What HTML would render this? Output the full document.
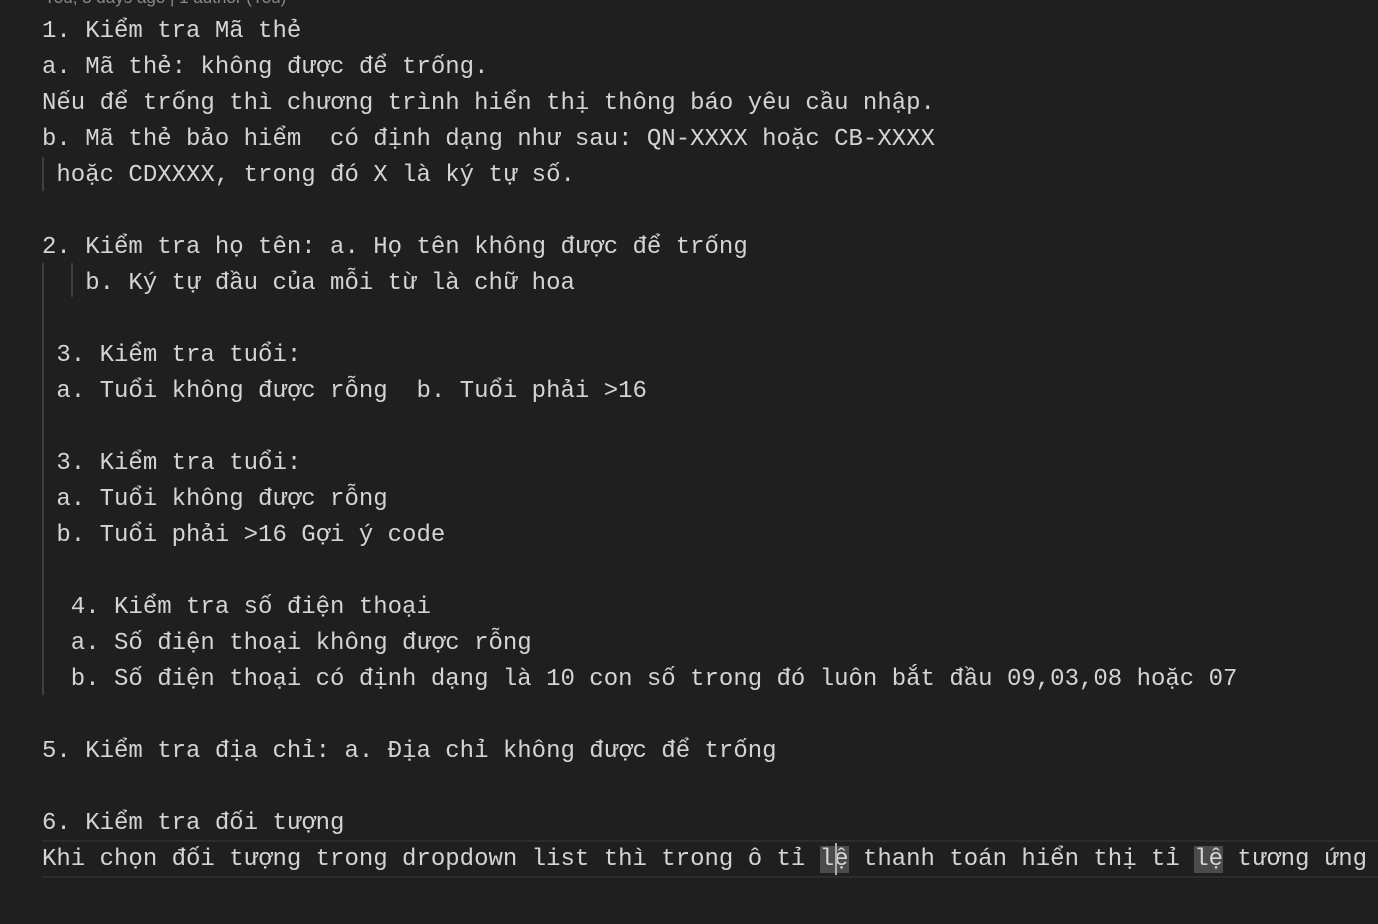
<!DOCTYPE html>
<html><head><meta charset="utf-8"><style>
html,body{margin:0;padding:0;background:#1f1f1f;width:1378px;height:924px;overflow:hidden}
body{position:relative;font-family:"Liberation Mono","DejaVu Sans Mono",monospace;font-size:24px;color:#d4d4d4}
.l{position:absolute;left:42px;height:36px;line-height:36px;white-space:pre}
.g{position:absolute;width:2px;background:#404040}
.cur{position:absolute;left:42px;right:0;top:840px;height:34px;border-top:2px solid #2c2c2c;border-bottom:2px solid #2c2c2c;}
.hl{background:#4b4b4b}
.top{position:absolute;left:44px;top:-12px;font-family:"Liberation Sans",sans-serif;font-size:17px;color:#8a8a8a;white-space:pre}
</style></head><body>
<div class="top">You, 3 days ago | 1 author (You)</div>
<div class="cur"></div>
<div class="g" style="left:42px;top:157px;height:34px"></div>
<div class="g" style="left:42px;top:263px;height:432px"></div>
<div class="g" style="left:71px;top:263px;height:34px"></div>
<div class="l" style="top:14px">1. Ki&#7875;m tra Mã thẻ</div>
<div class="l" style="top:50px">a. Mã thẻ: không được &#273;&#7875; tr&#7889;ng.</div>
<div class="l" style="top:86px">N&#7871;u &#273;&#7875; tr&#7889;ng thì chương trình hi&#7875;n thị thông báo yêu c&#7847;u nhập.</div>
<div class="l" style="top:122px">b. Mã thẻ bảo hi&#7875;m  có định dạng như sau: QN-XXXX hoặc CB-XXXX</div>
<div class="l" style="top:158px"> hoặc CDXXXX, trong đó X là ký tự s&#7889;.</div>
<div class="l" style="top:230px">2. Ki&#7875;m tra họ tên: a. Họ tên không được &#273;&#7875; tr&#7889;ng</div>
<div class="l" style="top:266px">   b. Ký tự &#273;&#7847;u của m&#7895;i từ là chữ hoa</div>
<div class="l" style="top:338px"> 3. Ki&#7875;m tra tu&#7893;i:</div>
<div class="l" style="top:374px"> a. Tu&#7893;i không được r&#7895;ng  b. Tu&#7893;i phải >16</div>
<div class="l" style="top:446px"> 3. Ki&#7875;m tra tu&#7893;i:</div>
<div class="l" style="top:482px"> a. Tu&#7893;i không được r&#7895;ng</div>
<div class="l" style="top:518px"> b. Tu&#7893;i phải >16 Gợi ý code</div>
<div class="l" style="top:590px">  4. Ki&#7875;m tra s&#7889; điện thoại</div>
<div class="l" style="top:626px">  a. S&#7889; điện thoại không được r&#7895;ng</div>
<div class="l" style="top:662px">  b. S&#7889; điện thoại có định dạng là 10 con s&#7889; trong đó luôn b&#7855;t &#273;&#7847;u 09,03,08 hoặc 07</div>
<div class="l" style="top:734px">5. Ki&#7875;m tra địa chỉ: a. Địa chỉ không được &#273;&#7875; tr&#7889;ng</div>
<div class="l" style="top:806px">6. Ki&#7875;m tra &#273;&#7889;i tượng</div>
<div class="l" style="top:842px">Khi chọn &#273;&#7889;i tượng trong dropdown list thì trong ô tỉ <span class="hl">lệ</span> thanh toán hi&#7875;n thị tỉ <span class="hl">lệ</span> tương ứng</div>
<div style="position:absolute;left:835px;top:843px;width:2px;height:32px;background:#aeafad"></div>
</body></html>
